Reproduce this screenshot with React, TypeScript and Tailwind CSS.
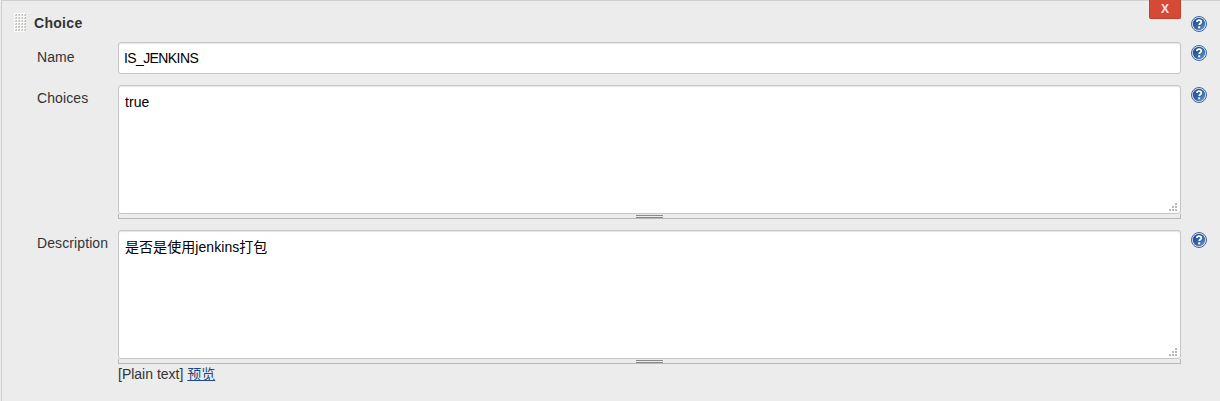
import type { ReactNode } from "react";

function HelpIcon() {
  return (
    <svg width="16" height="16" viewBox="0 0 16 16" role="img" aria-label="Help" className="block">
      <defs>
        <linearGradient id="help" x1="0" y1="0" x2="1" y2="1">
          <stop offset="0" stopColor="#204d8f" />
          <stop offset="0.55" stopColor="#3465a4" />
          <stop offset="1" stopColor="#7b9fcc" />
        </linearGradient>
      </defs>
      <circle cx="8" cy="8" r="7.5" fill="#e6eef7" stroke="#3c659f" strokeWidth="1" />
      <circle cx="8" cy="8" r="6.2" fill="url(#help)" />
      <path d="M5.9 6.1C5.9 4.7 6.8 4.1 8.1 4.1s2.2.7 2.2 1.8c0 1.6-2.1 1.6-2.1 3.2" fill="none" stroke="#fff" strokeWidth="1.7" />
      <rect x="7.2" y="10.3" width="2" height="2" fill="#fff" />
    </svg>
  );
}

function DragHandle() {
  const rows = [0, 1, 2, 3, 4, 5];
  const cols = [0, 1, 2, 3];
  return (
    <svg width="12" height="19" viewBox="0 0 12 19" shapeRendering="crispEdges" className="block">
      <rect width="12" height="19" fill="#fafafa" />
      {rows.map((r) =>
        cols.map((c) => (
          <g key={`${r}-${c}`}>
            <rect x={c * 3 + 1} y={r * 3 + 1} width="2" height="2" fill="#ccccc8" />
            <rect x={c * 3 + 1} y={r * 3 + 1} width="1" height="1" fill="#e2e2df" />
            <rect x={c * 3 + 2} y={r * 3 + 1} width="1" height="1" fill="#b8b8b2" />
          </g>
        ))
      )}
    </svg>
  );
}

interface FieldProps {
  label: string;
  children: ReactNode;
  labelPad: string;
  iconPad?: string;
}

function Field({ label, children, labelPad, iconPad = "pt-[2px]" }: FieldProps) {
  return (
    <div className="flex items-start">
      <div className={`w-[81px] shrink-0 leading-4 tracking-[0.1px] ${labelPad}`}>{label}</div>
      <div className="w-[1063px] shrink-0">{children}</div>
      <div className={`ml-[10px] ${iconPad}`}>
        <HelpIcon />
      </div>
    </div>
  );
}

function TextBox({ value }: { value: string }) {
  return (
    <>
      <div className="relative h-[129px] rounded-[3px] border border-[#c6c6c6] bg-white px-1.5 pt-2 leading-4 tracking-[0.06px] text-black shadow-[inset_0_1px_1px_rgba(0,0,0,0.1)]">
        {value}
        <svg width="8" height="8" viewBox="0 0 8 8" fill="#b8b8b8" shapeRendering="crispEdges" className="absolute right-[3px] bottom-[2px]">
          <path d="M6 0h2v2H6zM3 3h2v2H3zM6 3h2v2H6zM0 6h2v2H0zM3 6h2v2H3zM6 6h2v2H6z" />
        </svg>
      </div>
      <div className="flex h-[5px] justify-center border-x border-b border-[#b8b8b8]">
        <div className="mt-px h-[3px] w-[27px] border-y border-[#888]" />
      </div>
    </>
  );
}

export default function App() {
  return (
    <div className="h-[401px] w-[1220px] overflow-hidden bg-[#ececec] pl-px font-['Liberation_Sans','Noto_Sans_CJK_SC',sans-serif] text-[14px] text-[#333]">
      <div className="h-full border-t border-l border-[#d0d0d0]">
        <div className="flex h-[41px] items-start">
          <div className="mt-3 ml-3">
            <DragHandle />
          </div>
          <h2 className="mt-[14px] ml-2 leading-4 font-bold tracking-[0.3px]">Choice</h2>
          <button className="-mt-px ml-auto h-[19px] w-8 rounded-b-[2px] border border-t-0 border-[#c2412f] bg-[#d64937] text-[12px] leading-[18px] font-bold text-[#f3e3e4]">
            X
          </button>
          <div className="mt-[15px] mr-[13px] ml-[10px]">
            <HelpIcon />
          </div>
        </div>
        <div className="flex flex-col gap-[11px] pl-[35px]">
          <Field label="Name" labelPad="pt-[7px]" iconPad="pt-[3px]">
            <div className="h-8 rounded-[3px] border border-[#c6c6c6] bg-white px-[5px] pt-[7px] leading-4 tracking-[-0.6px] text-black shadow-[inset_0_1px_1px_rgba(0,0,0,0.1)]">
              IS_JENKINS
            </div>
          </Field>
          <Field label="Choices" labelPad="pt-[5px]">
            <TextBox value="true" />
          </Field>
          <Field label="Description" labelPad="pt-[5px]">
            <TextBox value="是否是使用jenkins打包" />
            <div className="pt-[2px] leading-4">
              [Plain text]{" "}
              <a href="#" className="text-[#204a87] underline">
                预览
              </a>
            </div>
          </Field>
        </div>
      </div>
    </div>
  );
}
